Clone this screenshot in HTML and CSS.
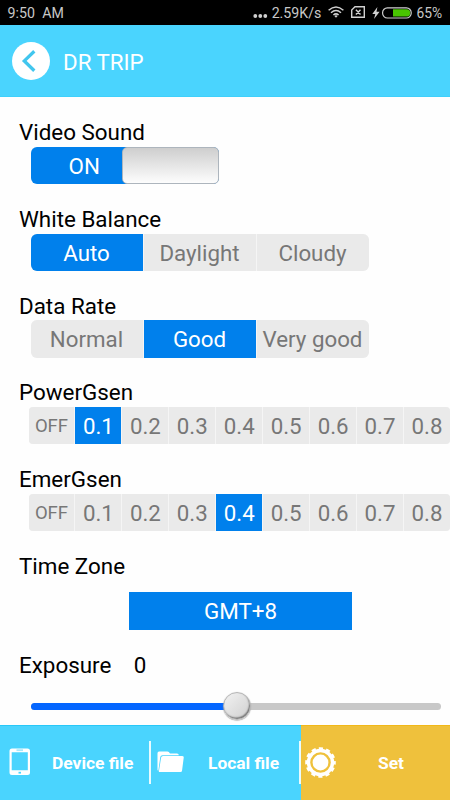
FILE: index.html
```html
<!DOCTYPE html>
<html lang="en">
<head>
<meta charset="utf-8">
<title>DR TRIP</title>
<link rel="stylesheet" href="styles.css">
</head>
<body>
<div class="statusbar">
  <span class="clock"><span>9:50</span><span>AM</span></span>
  <div class="status-right">
    <svg class="dots" width="15" height="25" viewBox="0 0 15 25"><g fill="#d0d0d0"><circle cx="2.3" cy="16" r="1.9"/><circle cx="7.3" cy="16" r="1.9"/><circle cx="12.3" cy="16" r="1.9"/></g></svg>
    <span class="speed">2.59K/s</span>
    <svg class="wifi" width="16" height="12" viewBox="0 0 16 12"><g fill="none" stroke="#d0d0d0" stroke-width="1.5"><path d="M.6 4.3Q8-2.3 15.4 4.3"/><path d="M3 6.7Q8 2.3 13 6.7"/><path d="M5.4 9Q8 6.7 10.6 9"/></g><path d="M6.4 9.9Q8 8.8 9.6 9.9L8 11.7z" fill="#d0d0d0"/></svg>
    <svg class="sim" width="14" height="12" viewBox="0 0 14 12"><path d="M4 .7H13.3V11.3H.7V4zM4.9 3.8l4.6 4.6M9.5 3.8L4.9 8.4" fill="none" stroke="#d0d0d0" stroke-width="1.4"/></svg>
    <svg class="bolt" width="8" height="12" viewBox="0 0 8 12"><path d="M5.4 0L.3 7H3.3L2 12L7.6 4.7H4.5z" fill="#d0d0d0"/></svg>
    <svg class="battery" width="30" height="12" viewBox="0 0 30 12"><rect x=".6" y=".8" width="28.6" height="10.2" rx="4.8" fill="none" stroke="#d0d0d0" stroke-width="1.2"/><path d="M11 2.2H24.5Q28.2 2.2 28.2 5.9T24.5 9.6H11z" fill="#48c500"/></svg>
    <span class="percent">65%</span>
  </div>
</div>
<header class="header">
  <svg width="38" height="38" viewBox="0 0 38 38"><circle cx="19" cy="19" r="19" fill="#fff"/><path d="M22.3 9.2L12.3 18.9L22.3 28.7" fill="none" stroke="#41c6ee" stroke-width="3.3"/></svg>
  <h1 class="title">DR TRIP</h1>
</header>
<main class="settings">
  <section class="setting">
    <div class="label">Video Sound</div>
    <div class="switch"><span class="switch-on">ON</span><span class="switch-thumb"></span></div>
  </section>
  <section class="setting">
    <div class="label">White Balance</div>
    <div class="segments three"><span class="seg active">Auto</span><span class="seg">Daylight</span><span class="seg">Cloudy</span></div>
  </section>
  <section class="setting">
    <div class="label">Data Rate</div>
    <div class="segments three"><span class="seg">Normal</span><span class="seg active">Good</span><span class="seg">Very good</span></div>
  </section>
  <section class="setting">
    <div class="label">PowerGsen</div>
    <div class="segments nine"><span class="seg off">OFF</span><span class="seg active">0.1</span><span class="seg">0.2</span><span class="seg">0.3</span><span class="seg">0.4</span><span class="seg">0.5</span><span class="seg">0.6</span><span class="seg">0.7</span><span class="seg">0.8</span></div>
  </section>
  <section class="setting">
    <div class="label">EmerGsen</div>
    <div class="segments nine"><span class="seg off">OFF</span><span class="seg">0.1</span><span class="seg">0.2</span><span class="seg">0.3</span><span class="seg active">0.4</span><span class="seg">0.5</span><span class="seg">0.6</span><span class="seg">0.7</span><span class="seg">0.8</span></div>
  </section>
  <section class="setting timezone">
    <div class="label">Time Zone</div>
    <div class="zone-button">GMT+8</div>
  </section>
  <section class="exposure">
    <div class="label exposure-label"><span>Exposure</span><span>0</span></div>
    <div class="slider"><div class="slider-fill"></div><div class="slider-thumb"></div></div>
  </section>
</main>
<nav class="tabs">
  <div class="tab device">
    <svg width="22" height="28" viewBox="0 0 22 28"><path fill-rule="evenodd" d="M3 .5H18.5Q21 .5 21 3V24.5Q21 27 18.5 27H3Q.5 27 .5 24.5V3Q.5 .5 3 .5zM2.7 4.3V22.3H18.8V4.3z" fill="#fff"/><path d="M7.5 2.2H14" stroke="#a5e8fd" stroke-width="1.8"/><rect x="9.5" y="23.8" width="2.5" height="1.8" fill="#4ad4fe"/></svg>
    <span class="tab-text">Device file</span>
  </div>
  <div class="tab local">
    <svg width="28" height="22" viewBox="0 0 28 22"><path d="M.5 19V2.200Q.5 .6 2 .6H10.500Q12 .6 13 2.400H20Q21.800 2.400 21.800 4.300H5.500Q3.600 4.300 3.300 6L1.300 20z" fill="#fff"/><path d="M6 5H25Q27 5 26.700 6.700L25 20Q24.800 21 23.500 21H1.800L4.100 6.500Q4.400 5 6 5z" fill="#fff"/></svg>
    <span class="tab-text">Local file</span>
  </div>
  <div class="tab set">
    <svg width="31" height="31" viewBox="-15.5 -15.5 31 31"><circle r="12" fill="none" stroke="#fff" stroke-width="3.4"/><circle r="14" fill="none" stroke="#fff" stroke-width="2.6" stroke-dasharray="4.2 3.13" stroke-dashoffset="2.1"/><circle r="7.9" fill="#fff"/></svg>
    <span class="tab-text">Set</span>
  </div>
</nav>
</body>
</html>
```

FILE: styles.css
```css
* { box-sizing: border-box; }
body {
  margin: 0;
  width: 450px;
  height: 800px;
  overflow: hidden;
  display: flex;
  flex-direction: column;
  background: #fefefe;
  font-family: Roboto, "Liberation Sans", sans-serif;
  color: #000;
}
.statusbar {
  flex: none;
  height: 25px;
  display: flex;
  justify-content: space-between;
  padding: 0 8px 0 7.5px;
  background: #000;
  color: #c8c8c8;
  font-size: 14.2px;
  line-height: 27px;
  white-space: nowrap;
}
.clock { display: flex; gap: 7.5px; }
.status-right { display: flex; height: 25px; }
.status-right svg { flex: none; }
.speed { margin-left: 4px; }
.wifi { margin: 6px 0 0 7px; }
.sim { margin: 6px 0 0 7px; }
.bolt { margin: 7px 0 0 7px; }
.battery { margin: 7px 0 0 2px; }
.percent { margin-left: 4px; font-size: 13.8px; }
.header {
  flex: none;
  height: 72px;
  display: flex;
  align-items: center;
  padding: 1px 0 0 12px;
  gap: 13px;
  background: #4ad4fe;
  border-bottom: 1px solid #3fd0fb;
  color: #fff;
}
.title { margin: 0; padding-top: 2px; font-size: 22.3px; font-weight: 400; line-height: 26px; }
.settings { flex: 1; min-height: 0; padding-top: 22.5px; }
.setting { height: 86.67px; }
.label {
  height: 27.5px;
  padding-left: 19px;
  font-size: 22.4px;
  line-height: 26px;
  white-space: nowrap;
}
.setting:first-child .label { line-height: 25px; }
.switch {
  width: 188px;
  height: 37.3px;
  margin-left: 31px;
  display: flex;
  background: #0080ec;
  border-radius: 6px;
  line-height: 38px;
  font-size: 22.4px;
}
.switch-on { flex: 1; padding-left: 37.5px; color: #fff; }
.switch-thumb {
  width: 97px;
  border: 1px solid #adb5bd;
  border-radius: 5px;
  background: linear-gradient(#cecece, #fdfdfd);
}
.segments {
  display: grid;
  height: 37.3px;
  border-radius: 6px;
  overflow: hidden;
  column-gap: 1px;
  background: #f5f5f5;
  color: #777;
  font-size: 22.3px;
  line-height: 38px;
  text-align: center;
  white-space: nowrap;
}
.three { width: 338px; margin-left: 31px; grid-template-columns: repeat(3, 1fr); }
.three .seg { padding-right: 1px; }
.nine { width: 421.5px; margin-left: 28.5px; grid-template-columns: repeat(9, 1fr); border-radius: 4px; }
.seg { background: #eaeaea; }
.off { font-size: 18.5px; }
.seg.active { background: #0080ec; color: #fff; }
.timezone { height: 99.2px; }
.zone-button {
  width: 223px;
  height: 37.5px;
  margin: 12.2px 0 0 129px;
  background: #0080ec;
  color: #fff;
  text-align: center;
  font-size: 22.4px;
  line-height: 39px;
}
.exposure-label { display: flex; gap: 22.5px; height: 51.5px; }
.slider {
  position: relative;
  width: 410px;
  height: 6.5px;
  margin-left: 31px;
  border-radius: 4px;
  background: #c8c8c8;
}
.slider-fill { width: 50%; height: 100%; border-radius: 4px 0 0 4px; background: #0466ff; }
.slider-thumb {
  position: absolute;
  left: 191.5px;
  top: -11px;
  width: 28px;
  height: 28px;
  border-radius: 50%;
  border: 1px solid #b5b5b5;
  background: linear-gradient(135deg, #f2f2f2, #cfcfcf);
  box-shadow: inset -1px -1.5px 1.5px #777, 0 .5px 1px #999;
}
.tabs {
  flex: none;
  height: 75px;
  display: grid;
  grid-template-columns: 151px 150px 149px;
  background: #4ad4fe;
  border-top: 1px solid #28c8f8;
  color: #fff;
}
.tab { position: relative; display: flex; align-items: center; padding-bottom: 2px; }
.device::after, .local::after {
  content: "";
  position: absolute;
  right: 0;
  top: 15px;
  width: 2px;
  height: 43px;
  background: #e8fbff;
}
.tab-text { font-size: 17.4px; font-weight: 700; line-height: 20px; white-space: nowrap; padding-top: 2px; }
.device { padding-left: 8.5px; gap: 21.5px; }
.local { padding-left: 5.5px; gap: 23.5px; }
.set { padding-left: 4px; gap: 42px; background: #efc13c; margin-top: -1px; border-top: 1px solid #f2b818; }
```
